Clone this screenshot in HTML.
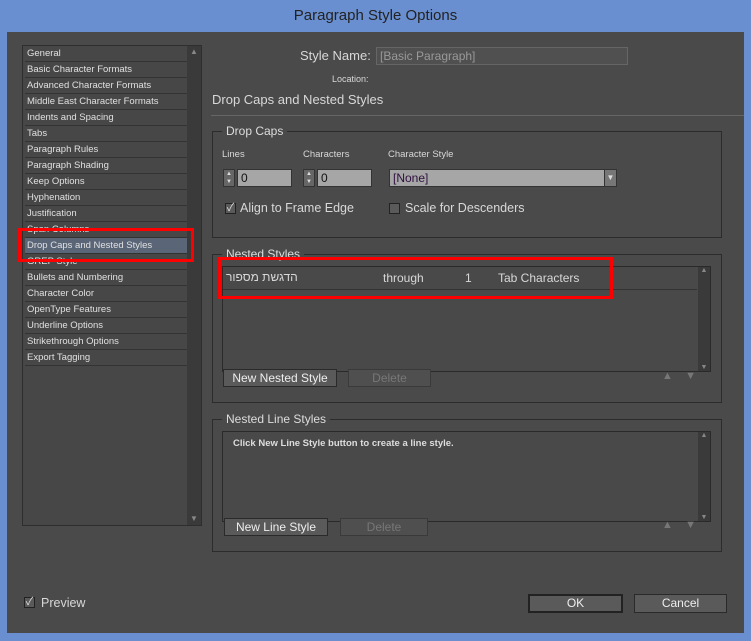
<!DOCTYPE html>
<html><head><meta charset="utf-8"><style>
*{box-sizing:border-box;margin:0;padding:0}
body{width:751px;height:641px;background:#6a8fd0;font-family:"Liberation Sans","Noto Sans CJK SC",sans-serif;color:#d8d8d8;position:relative;overflow:hidden}
.a{position:absolute}
#title{left:0;top:0;width:751px;height:32px;text-align:center;line-height:32px;font-size:15px;color:#222}
#main{left:7px;top:32px;width:737px;height:601px;background:#4a4a4a}
.list{left:22px;top:45px;width:180px;height:481px;border:1px solid #2e2e2e;background:#474747}
.item{position:absolute;left:2px;width:163px;height:16px;border-bottom:1px solid #333;font-size:9.5px;line-height:15px;padding-left:2px;color:#e0e0e0;white-space:nowrap}
.sb{left:187px;top:46px;width:14px;height:479px;background:#3a3a3a}
.grp{border:1px solid #2c2c2c;}
.lbl{font-size:12px;color:#ddd;background:#4a4a4a;padding:0 4px}
.field{background:#a6a6a6;border:1px solid #333;color:#111;font-size:12px;padding-left:3px;line-height:16px}
.btn{border:1px solid #2a2a2a;background:#5a5a5a;color:#eee;font-size:12px;text-align:center;line-height:16px}
.dis{background:#4f4f4f;color:#777;border-color:#3a3a3a}
.red{border:3px solid #ff0000}
.chk{width:11px;height:11px;border:1px solid #222;background:#5a5a5a;font-size:11px;line-height:9px;color:#ddd;text-align:center}
.spin{width:12px;height:18px;background:#666;border:1px solid #333;font-size:6px;line-height:8px;color:#ddd;text-align:center}
</style></head><body>
<div class="a" id="title">Paragraph Style Options</div>
<div class="a" id="main"></div>
<div class="a list">
<div class="item" style="top:0">General</div>
<div class="item" style="top:16px">Basic Character Formats</div>
<div class="item" style="top:32px">Advanced Character Formats</div>
<div class="item" style="top:48px">Middle East Character Formats</div>
<div class="item" style="top:64px">Indents and Spacing</div>
<div class="item" style="top:80px">Tabs</div>
<div class="item" style="top:96px">Paragraph Rules</div>
<div class="item" style="top:112px">Paragraph Shading</div>
<div class="item" style="top:128px">Keep Options</div>
<div class="item" style="top:144px">Hyphenation</div>
<div class="item" style="top:160px">Justification</div>
<div class="item" style="top:176px">Span Columns</div>
<div class="item" style="top:192px;background:#5a6678">Drop Caps and Nested Styles</div>
<div class="item" style="top:208px">GREP Style</div>
<div class="item" style="top:224px">Bullets and Numbering</div>
<div class="item" style="top:240px">Character Color</div>
<div class="item" style="top:256px">OpenType Features</div>
<div class="item" style="top:272px">Underline Options</div>
<div class="item" style="top:288px">Strikethrough Options</div>
<div class="item" style="top:304px">Export Tagging</div>
</div>
<div class="a sb"><div style="color:#888;font-size:8px;text-align:center;margin-top:1px">▲</div><div style="position:absolute;bottom:2px;width:14px;color:#888;font-size:8px;text-align:center">▼</div></div>
<div class="a red" style="left:18px;top:228px;width:176px;height:34px"></div>

<div class="a" style="left:300px;top:48px;font-size:13px">Style Name:</div>
<div class="a field" style="left:376px;top:47px;width:252px;height:18px;background:#505050;color:#999;border-color:#666">[Basic Paragraph]</div>
<div class="a" style="left:332px;top:74px;font-size:9px">Location:</div>
<div class="a" style="left:212px;top:92px;font-size:13px">Drop Caps and Nested Styles</div>
<div class="a" style="left:211px;top:115px;width:533px;height:1px;background:#666"></div>

<div class="a grp" style="left:212px;top:131px;width:510px;height:107px"></div>
<div class="a lbl" style="left:222px;top:124px">Drop Caps</div>
<div class="a" style="left:222px;top:149px;font-size:9.5px">Lines</div>
<div class="a" style="left:303px;top:149px;font-size:9.5px">Characters</div>
<div class="a" style="left:388px;top:149px;font-size:9.5px">Character Style</div>
<div class="a spin" style="left:223px;top:169px">▲<br>▼</div>
<div class="a field" style="left:237px;top:169px;width:55px;height:18px">0</div>
<div class="a spin" style="left:303px;top:169px">▲<br>▼</div>
<div class="a field" style="left:317px;top:169px;width:55px;height:18px">0</div>
<div class="a field" style="left:389px;top:169px;width:228px;height:18px;color:#301040">[None]<span style="position:absolute;right:0;top:0;width:12px;height:16px;background:#777;border-left:1px solid #333;font-size:8px;color:#ddd;text-align:center">▼</span></div>
<div class="a chk" style="left:225px;top:203px">✓</div>
<div class="a" style="left:240px;top:201px;font-size:12.5px">Align to Frame Edge</div>
<div class="a chk" style="left:389px;top:203px"></div>
<div class="a" style="left:405px;top:201px;font-size:12.5px">Scale for Descenders</div>

<div class="a grp" style="left:212px;top:254px;width:510px;height:149px"></div>
<div class="a lbl" style="left:222px;top:247px">Nested Styles</div>
<div class="a" style="left:222px;top:266px;width:489px;height:106px;border:1px solid #2a2a2a;background:#494949"></div>
<div class="a" style="left:698px;top:267px;width:12px;height:104px;background:#3a3a3a;font-size:7px;color:#888;text-align:center">▲<div style="position:absolute;bottom:0;width:12px">▼</div></div>
<div class="a" style="left:223px;top:289px;width:474px;height:1px;background:#333"></div>
<div class="a" style="left:226px;top:270px;font-size:12px">הדגשת מספור</div>
<div class="a" style="left:383px;top:271px;font-size:12px">through</div>
<div class="a" style="left:465px;top:271px;font-size:12px">1</div>
<div class="a" style="left:498px;top:271px;font-size:12px">Tab Characters</div>
<div class="a red" style="left:218px;top:257px;width:395px;height:42px"></div>
<div class="a btn" style="left:223px;top:369px;width:114px;height:18px">New Nested Style</div>
<div class="a btn dis" style="left:348px;top:369px;width:83px;height:18px">Delete</div>
<div class="a" style="left:662px;top:370px;font-size:11px;color:#777">▲ &nbsp;&nbsp; ▼</div>

<div class="a grp" style="left:212px;top:419px;width:510px;height:133px"></div>
<div class="a lbl" style="left:222px;top:412px">Nested Line Styles</div>
<div class="a" style="left:222px;top:431px;width:489px;height:91px;border:1px solid #2a2a2a;background:#494949"></div>
<div class="a" style="left:698px;top:432px;width:12px;height:89px;background:#3a3a3a;font-size:7px;color:#888;text-align:center">▲<div style="position:absolute;bottom:0;width:12px">▼</div></div>
<div class="a" style="left:233px;top:438px;font-size:9.5px;font-weight:bold;color:#ddd">Click New Line Style button to create a line style.</div>
<div class="a btn" style="left:224px;top:518px;width:104px;height:18px">New Line Style</div>
<div class="a btn dis" style="left:340px;top:518px;width:88px;height:18px">Delete</div>
<div class="a" style="left:662px;top:519px;font-size:11px;color:#777">▲ &nbsp;&nbsp; ▼</div>

<div class="a chk" style="left:24px;top:597px">✓</div>
<div class="a" style="left:41px;top:596px;font-size:12.5px">Preview</div>
<div class="a btn" style="left:528px;top:594px;width:95px;height:19px;border:2px solid #222;line-height:15px">OK</div>
<div class="a btn" style="left:634px;top:594px;width:93px;height:19px;line-height:17px">Cancel</div>
</body></html>
